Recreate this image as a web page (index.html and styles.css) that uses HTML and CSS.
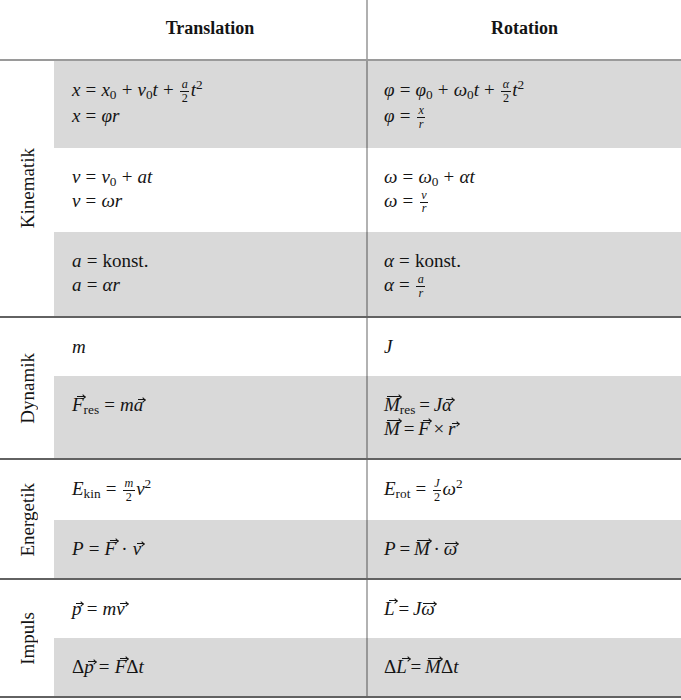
FILE: index.html
```html
<!DOCTYPE html>
<html lang="de">
<head>
<meta charset="utf-8">
<title>Translation und Rotation</title>
<link rel="stylesheet" href="styles.css">
</head>
<body>
<div class="table">
  <div class="head">
    <div class="corner"></div>
    <div class="hc">Translation</div>
    <div class="hc">Rotation</div>
  </div>

  <div class="group">
    <div class="label"><span>Kinematik</span></div>
    <div class="rows">
      <div class="row gray">
        <div class="cell">
          <div class="ln"><i>x</i><span class="op">=</span><i>x</i><span class="sub">0</span><span class="op">+</span><i>v</i><span class="sub">0</span><i>t</i><span class="op">+</span><span class="frac"><span class="num"><i>a</i></span><span class="den">2</span></span><i>t</i><span class="sup">2</span></div>
          <div class="ln"><i>x</i><span class="op">=</span><i>φr</i></div>
        </div>
        <div class="cell">
          <div class="ln"><i>φ</i><span class="op">=</span><i>φ</i><span class="sub">0</span><span class="op">+</span><i>ω</i><span class="sub">0</span><i>t</i><span class="op">+</span><span class="frac"><span class="num"><i>α</i></span><span class="den">2</span></span><i>t</i><span class="sup">2</span></div>
          <div class="ln"><i>φ</i><span class="op">=</span><span class="frac"><span class="num"><i>x</i></span><span class="den"><i>r</i></span></span></div>
        </div>
      </div>
      <div class="row">
        <div class="cell">
          <div class="ln"><i>v</i><span class="op">=</span><i>v</i><span class="sub">0</span><span class="op">+</span><i>at</i></div>
          <div class="ln"><i>v</i><span class="op">=</span><i>ωr</i></div>
        </div>
        <div class="cell">
          <div class="ln"><i>ω</i><span class="op">=</span><i>ω</i><span class="sub">0</span><span class="op">+</span><i>αt</i></div>
          <div class="ln"><i>ω</i><span class="op">=</span><span class="frac"><span class="num"><i>v</i></span><span class="den"><i>r</i></span></span></div>
        </div>
      </div>
      <div class="row gray">
        <div class="cell">
          <div class="ln"><i>a</i><span class="op">=</span>konst.</div>
          <div class="ln"><i>a</i><span class="op">=</span><i>αr</i></div>
        </div>
        <div class="cell">
          <div class="ln"><i>α</i><span class="op">=</span>konst.</div>
          <div class="ln"><i>α</i><span class="op">=</span><span class="frac"><span class="num"><i>a</i></span><span class="den"><i>r</i></span></span></div>
        </div>
      </div>
    </div>
  </div>

  <div class="group">
    <div class="label"><span>Dynamik</span></div>
    <div class="rows">
      <div class="row">
        <div class="cell"><div class="ln"><i>m</i></div></div>
        <div class="cell"><div class="ln"><i>J</i></div></div>
      </div>
      <div class="row gray">
        <div class="cell">
          <div class="ln"><i class="vec cap">F</i><span class="sub">res</span><span class="op">=</span><i>m</i><i class="vec">a</i></div>
        </div>
        <div class="cell tight">
          <div class="ln"><i class="vec cap long">M</i><span class="sub">res</span><span class="op">=</span><i>J</i><i class="vec">α</i></div>
          <div class="ln"><i class="vec cap long">M</i><span class="op">=</span><i class="vec cap">F</i><span class="op">×</span><i class="vec">r</i></div>
        </div>
      </div>
    </div>
  </div>

  <div class="group">
    <div class="label"><span>Energetik</span></div>
    <div class="rows">
      <div class="row">
        <div class="cell"><div class="ln"><i>E</i><span class="sub">kin</span><span class="op">=</span><span class="frac"><span class="num"><i>m</i></span><span class="den">2</span></span><i>v</i><span class="sup">2</span></div></div>
        <div class="cell"><div class="ln"><i>E</i><span class="sub">rot</span><span class="op">=</span><span class="frac"><span class="num"><i>J</i></span><span class="den">2</span></span><i>ω</i><span class="sup">2</span></div></div>
      </div>
      <div class="row gray">
        <div class="cell"><div class="ln"><i>P</i><span class="op">=</span><i class="vec cap">F</i><span class="op">·</span><i class="vec">v</i></div></div>
        <div class="cell tight"><div class="ln"><i>P</i><span class="op">=</span><i class="vec cap long">M</i><span class="op">·</span><i class="vec long">ω</i></div></div>
      </div>
    </div>
  </div>

  <div class="group">
    <div class="label"><span>Impuls</span></div>
    <div class="rows">
      <div class="row">
        <div class="cell"><div class="ln"><i class="vec">p</i><span class="op">=</span><i>m</i><i class="vec">v</i></div></div>
        <div class="cell tight"><div class="ln"><i class="vec cap">L</i><span class="op">=</span><i>J</i><i class="vec long">ω</i></div></div>
      </div>
      <div class="row gray">
        <div class="cell"><div class="ln">Δ<i class="vec">p</i><span class="op">=</span><i class="vec cap">F</i>Δ<i>t</i></div></div>
        <div class="cell tight"><div class="ln">Δ<i class="vec cap">L</i><span class="op">=</span><i class="vec cap long">M</i>Δ<i>t</i></div></div>
      </div>
    </div>
  </div>
</div>
</body>
</html>
```
FILE: styles.css
```css
* { box-sizing: border-box; }

html, body {
  margin: 0;
  padding: 0;
  background: #ffffff;
}

body {
  font-family: "Liberation Serif", "DejaVu Serif", serif;
  color: #141414;
  width: 681px;
}

.table {
  width: 681px;
}

.head {
  display: grid;
  grid-template-columns: 54px 312px 1fr;
  height: 61px;
  border-bottom: 2px solid #9a9a9a;
}

.hc {
  display: flex;
  align-items: center;
  justify-content: center;
  font-weight: bold;
  font-size: 18px;
  padding-bottom: 2px;
}

.hc + .hc {
  border-left: 2px solid #b0b0b0;
}

.group {
  display: flex;
  border-bottom: 2px solid #626262;
}

.label {
  width: 54px;
  flex: none;
  display: flex;
  align-items: center;
  justify-content: center;
}

.label span {
  writing-mode: vertical-rl;
  transform: rotate(180deg);
  font-size: 19px;
  line-height: 1;
}

.rows {
  flex: 1;
  min-width: 0;
}

.row {
  display: grid;
  grid-template-columns: 312px 1fr;
}

.row.gray {
  background: #d9d9d9;
}

.cell {
  padding: 17px 8px 17px 18px;
  font-size: 19px;
  line-height: 24px;
}

.cell + .cell {
  border-left: 2px solid rgba(0, 0, 0, 0.3);
  padding-left: 16px;
}

.ln {
  white-space: nowrap;
}

i {
  font-style: italic;
}

.op {
  margin: 0 0.27em;
  font-style: normal;
}

.tight .op {
  margin: 0 0.2em;
}

.sub {
  font-size: 0.7em;
  vertical-align: -0.26em;
  line-height: 0;
  font-style: normal;
}

.sup {
  font-size: 0.7em;
  vertical-align: 0.5em;
  line-height: 0;
}

.frac {
  display: inline-flex;
  flex-direction: column;
  align-items: center;
  vertical-align: middle;
  font-size: 0.64em;
  line-height: 0.95;
  margin: 0 0.12em;
}

.frac .num {
  border-bottom: 1px solid currentColor;
  padding: 0 0.12em 0.05em;
  align-self: stretch;
  text-align: center;
}

.frac .den {
  padding-top: 0.05em;
}

/* vector arrows over letters */
.vec {
  position: relative;
  display: inline-block;
  line-height: 1;
  --t: 0.2em;
  --l: 0.2em;
  --w: 0.38em;
}

.vec.cap {
  --t: 0.03em;
  --l: 0.28em;
  --w: 0.4em;
}

.vec.long {
  --l: 0.08em;
  --w: calc(100% - 0.06em);
}

.vec.long.cap {
  --l: 0.14em;
  --w: calc(100% - 0.12em);
}

.vec::before {
  content: "";
  position: absolute;
  top: var(--t);
  left: var(--l);
  width: var(--w);
  height: 1px;
  background: currentColor;
}

.vec::after {
  content: "";
  position: absolute;
  top: calc(var(--t) - 1px);
  left: calc(var(--l) + var(--w) - 3.6px);
  width: 3px;
  height: 3px;
  border-top: 1px solid currentColor;
  border-right: 1px solid currentColor;
  transform: rotate(45deg);
}
```
